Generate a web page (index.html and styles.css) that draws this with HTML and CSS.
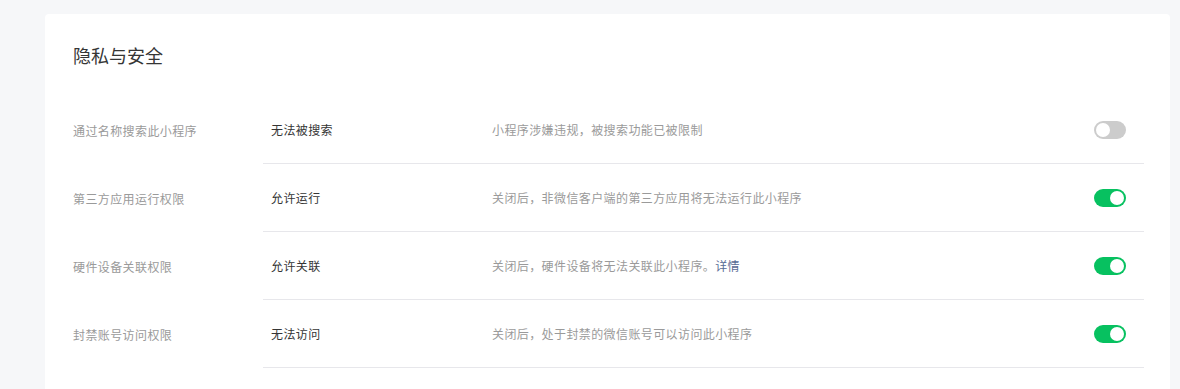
FILE: index.html
```html
<!DOCTYPE html>
<html lang="zh-CN">
<head>
    <meta charset="UTF-8">
    <meta name="viewport" content="width=device-width, initial-scale=1.0">
    <title>隐私与安全</title>
    <link rel="stylesheet" href="styles.css">
</head>
<body>

<div class="card">
    <h2 class="card-title">隐私与安全</h2>

    <div class="setting">
        <div class="setting-label">通过名称搜索此小程序</div>
        <div class="setting-body">
            <div class="setting-value">无法被搜索</div>
            <div class="setting-desc">小程序涉嫌违规，被搜索功能已被限制</div>
            <span class="switch"></span>
        </div>
    </div>

    <div class="setting">
        <div class="setting-label">第三方应用运行权限</div>
        <div class="setting-body">
            <div class="setting-value">允许运行</div>
            <div class="setting-desc">关闭后，非微信客户端的第三方应用将无法运行此小程序</div>
            <span class="switch on"></span>
        </div>
    </div>

    <div class="setting">
        <div class="setting-label">硬件设备关联权限</div>
        <div class="setting-body">
            <div class="setting-value">允许关联</div>
            <div class="setting-desc">关闭后，硬件设备将无法关联此小程序。<a href="#">详情</a></div>
            <span class="switch on"></span>
        </div>
    </div>

    <div class="setting">
        <div class="setting-label">封禁账号访问权限</div>
        <div class="setting-body">
            <div class="setting-value">无法访问</div>
            <div class="setting-desc">关闭后，处于封禁的微信账号可以访问此小程序</div>
            <span class="switch on"></span>
        </div>
    </div>
</div>

</body>
</html>
```

FILE: styles.css
```css
/* Stili generali */
body {
    font-family: "Noto Sans CJK SC", "Noto Sans", sans-serif;
    margin: 0;
    padding: 14px 10px 0 45px;
    background-color: #f6f7f9;
    color: #353535;
}

.card {
    background-color: #fff;
    border-radius: 4px;
    padding: 26px 26px 40px 28px;
}

.card-title {
    margin: 0 0 26px 0;
    font-size: 18px;
    font-weight: 400;
    line-height: 30px;
    color: #353535;
}

.setting {
    display: flex;
    align-items: stretch;
    height: 68px;
    font-size: 12px;
    letter-spacing: 0.4px;
}

.setting-label {
    width: 190px;
    display: flex;
    align-items: center;
    color: #9a9a9a;
}

.setting-body {
    flex: 1;
    display: flex;
    align-items: center;
    padding: 0 18px 0 8px;
    border-bottom: 1px solid #e7e7eb;
}

.setting-value {
    width: 221px;
}

.setting-desc {
    flex: 1;
    color: #9a9a9a;
}

.setting-desc a {
    color: #576b95;
    text-decoration: none;
}

/* Interruttore */
.switch {
    position: relative;
    width: 32px;
    height: 18px;
    border-radius: 9px;
    background-color: #cccccc;
}

.switch::after {
    content: "";
    position: absolute;
    top: 2px;
    left: 2px;
    width: 14px;
    height: 14px;
    border-radius: 50%;
    background-color: #fff;
}

.switch.on {
    background-color: #07c160;
}

.switch.on::after {
    left: 16px;
}
```
